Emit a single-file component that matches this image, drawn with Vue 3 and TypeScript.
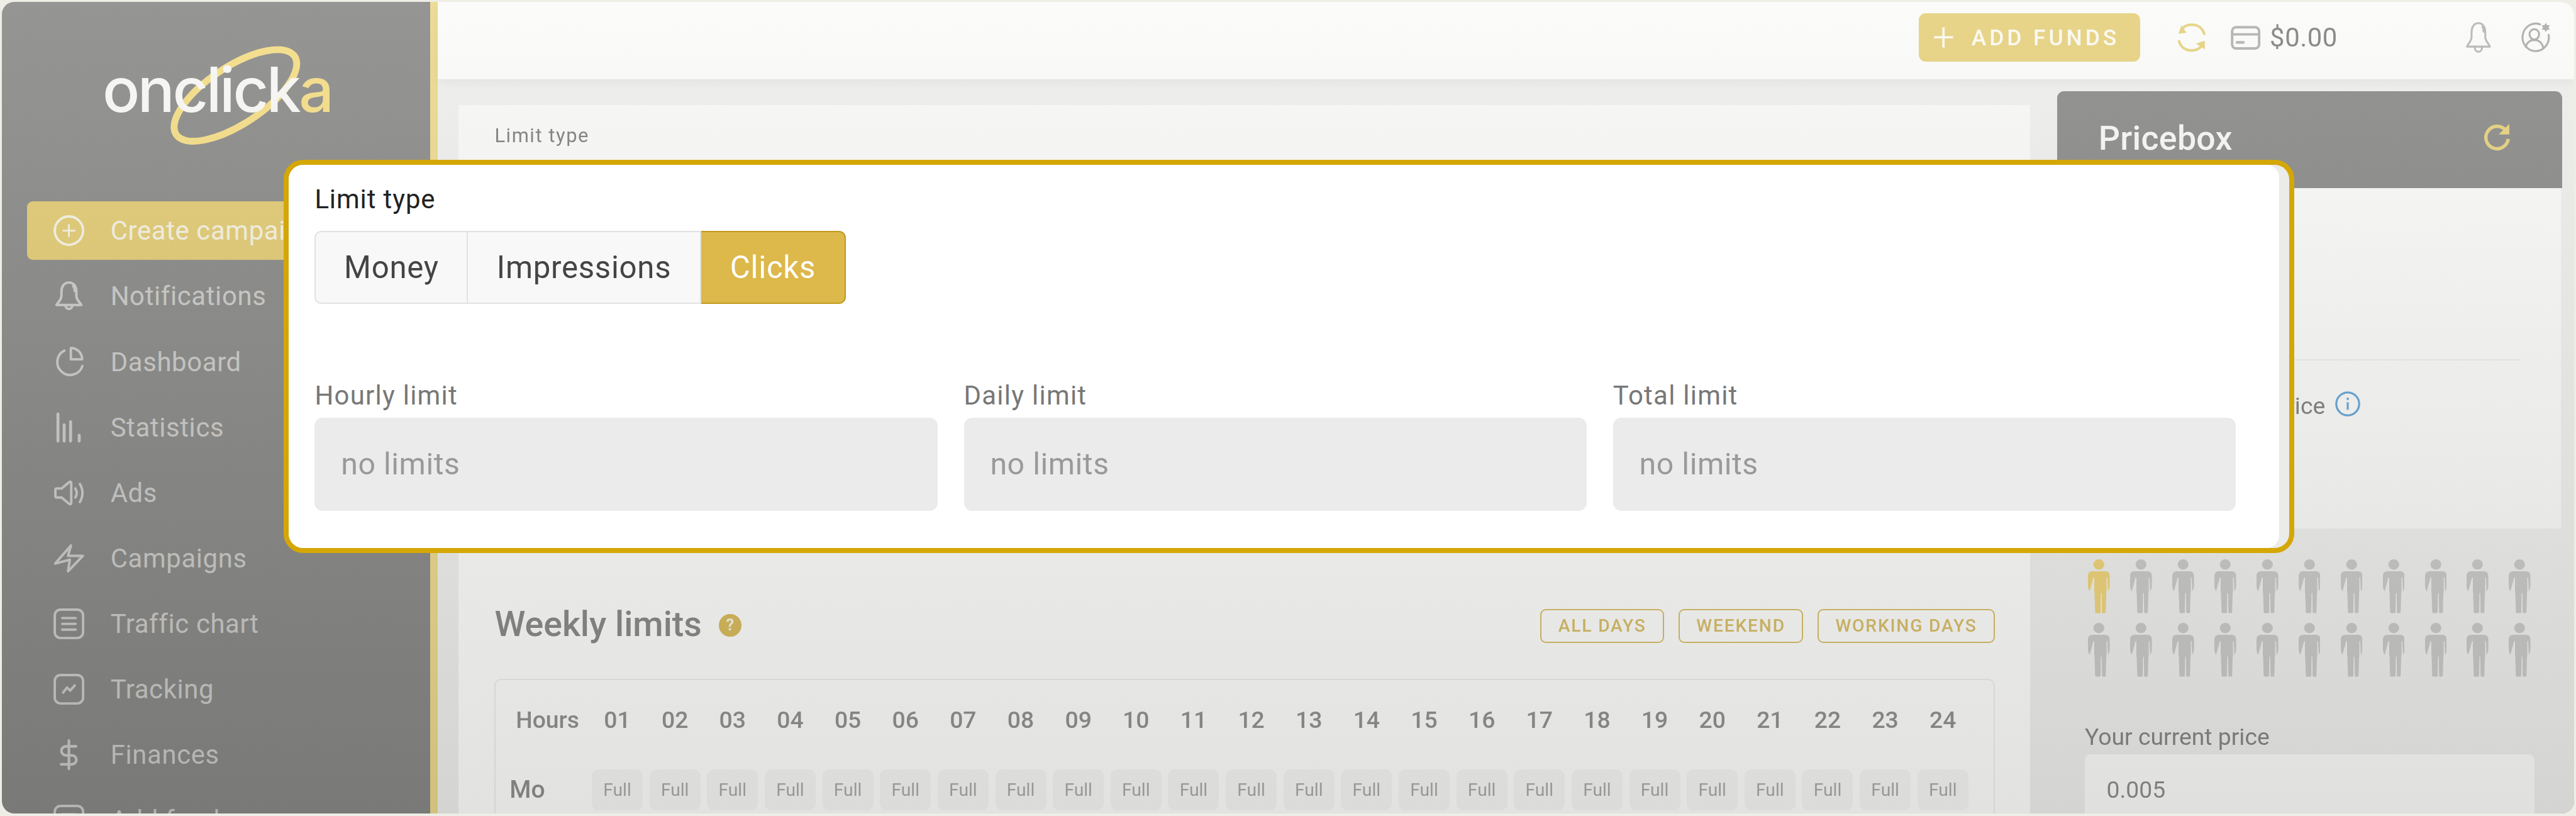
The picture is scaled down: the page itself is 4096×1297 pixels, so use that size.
<script setup lang="ts">
interface NavItem { label: string; icon: string; active?: boolean }
const nav: NavItem[] = [
  { label: 'Create campaign', icon: 'plus', active: true },
  { label: 'Notifications', icon: 'bell' },
  { label: 'Dashboard', icon: 'pie' },
  { label: 'Statistics', icon: 'bars' },
  { label: 'Ads', icon: 'ads' },
  { label: 'Campaigns', icon: 'bolt' },
  { label: 'Traffic chart', icon: 'list' },
  { label: 'Tracking', icon: 'track' },
  { label: 'Finances', icon: 'dollar' },
  { label: 'Add funds', icon: 'list' }
]
const hours: string[] = Array.from({ length: 24 }, (_, i) => String(i + 1).padStart(2, '0'))
const people: number[] = Array.from({ length: 22 }, (_, i) => i)
const limits: string[] = ['Hourly limit', 'Daily limit', 'Total limit']
</script>

<template>
  <div class="stage">
    <div class="window">
      <aside class="sidebar">
        <div class="logo">
          <svg class="ring" viewBox="0 0 227 173" fill="none">
            <ellipse cx="113.5" cy="86.5" rx="124" ry="50" transform="rotate(-33.4 113.5 86.5)" stroke="#f5e092" stroke-width="12" />
          </svg>
          <span class="logo-text">onclick<b>a</b></span>
        </div>
        <nav class="nav">
          <div v-for="item in nav" :key="item.label" class="nav-item" :class="{ active: item.active }">
            <svg class="nav-icon" viewBox="0 0 24 24" fill="none" stroke="currentColor" stroke-width="1.9" stroke-linecap="round" stroke-linejoin="round">
              <template v-if="item.icon === 'plus'">
                <circle cx="12" cy="12" r="11" />
                <path d="M12 7.5v9M7.5 12h9" stroke-width="1.4" />
              </template>
              <template v-else-if="item.icon === 'bell'">
                <path d="M12 1.5C8.2 1.5 6.2 4.6 6.2 8.5v3.4c0 3-2.6 5-3.9 7h19.4c-1.300-2-3.900-4-3.900-7V8.500c0-3.900-2-7-5.800-7Z" />
                <path d="M9.500 19.500a2.500 2.500 0 0 0 5 0M15.300 4.300c.9 1 1.300 2.300 1.300 3.900" />
              </template>
              <template v-else-if="item.icon === 'pie'">
                <path d="M8.500 3.500A10 10 0 1 0 22.500 15.500" />
                <path d="M13.500 1.500a8.800 8.800 0 0 1 8.800 8.800h-8.800Z" />
              </template>
              <template v-else-if="item.icon === 'bars'">
                <path d="M3.500 1.500v21M8.300 10v12.500M13.300 7.500v15M20 18v4.500" stroke-width="2.300" />
              </template>
              <template v-else-if="item.icon === 'ads'">
                <path d="M2.500 8.500h3.800l6-5c.6-.5 1.500-.1 1.500.700v15.600c0 .8-.9 1.200-1.500.7l-6-5H2.500c-.6 0-1-.4-1-1V9.500c0-.6.4-1 1-1Z" />
                <path d="M17 8.500c1.300 2.200 1.300 4.800 0 7M20.500 5c2.700 4.300 2.700 9.700 0 14" />
              </template>
              <template v-else-if="item.icon === 'bolt'">
                <path d="M13.600 2l-2.300 8h11.600L11.300 22l1.400-9-11.400 3Z" />
              </template>
              <template v-else-if="item.icon === 'list'">
                <rect x="1" y="1" width="22" height="22" rx="4.500" />
                <path d="M6.800 7.500h10.400M6.800 12h10.400M6.800 16.500h10.400" />
              </template>
              <template v-else-if="item.icon === 'track'">
                <rect x="1" y="1" width="22" height="22" rx="4.500" />
                <path d="M7.500 14.500l3-3.800 2.500 2.300 3.500-4" />
              </template>
              <template v-else>
                <path d="M12 1v22M17.500 5.500H9.700a3.500 3.500 0 0 0 0 7h4.600a3.500 3.500 0 0 1 0 7H6" stroke-width="2.100" />
              </template>
            </svg>
            <span>{{ item.label }}</span>
          </div>
        </nav>
      </aside>

      <div class="main">
        <header class="topbar">
          <button class="add-funds"><span class="plus">+</span>ADD FUNDS</button>
          <svg class="sync" viewBox="0 0 24 24" fill="none" stroke="#e8d58a" stroke-width="2.200" stroke-linecap="round">
            <path d="M23 9C21.500 4 17.500 1 12 1 8 1 5 2.500 3 5.500" />
            <path d="M1 15.500C2.500 20.500 6.500 23.500 12 23.500c4 0 7-1.500 9-4.500" />
            <path d="M.5 9 3 1.500 7.500 8Z M23.500 15v7.500l-7.700-5Z" fill="#e8d58a" stroke="none" />
          </svg>
          <svg class="wallet" viewBox="0 0 26 21" fill="none" stroke="#b8b8b6" stroke-width="2.200">
            <rect x="1.200" y="1.200" width="23.600" height="18.600" rx="3.500" />
            <path d="M1.200 7.500h23.600" stroke-width="2" />
            <path d="M5.500 14.500h5.500" stroke-width="2.400" stroke-linecap="round" />
          </svg>
          <span class="balance">$0.00</span>
          <svg class="t-bell" viewBox="0 0 24 27" fill="none" stroke="#bdbdbb" stroke-width="1.700" stroke-linecap="round" stroke-linejoin="round">
            <path d="M12 1C8 1 6 4.500 6 9v4c0 3.500-3 6-4 8.500h20c-1-2.500-4-5-4-8.500V9c0-4.500-2-8-6-8Z" />
            <path d="M9 21.500v1.500a3 3 0 0 0 6 0v-1.500M15.500 4c.8 1.200 1.100 2.700 1.100 4.500" />
          </svg>
          <svg class="t-user" viewBox="0 0 27 26" fill="none" stroke="#b3b3b1" stroke-width="1.700" stroke-linecap="round">
            <path d="M17.500 1.800A11.500 12 0 1 0 25 11" />
            <ellipse cx="12.500" cy="10.500" rx="4.200" ry="4.500" />
            <path d="M5 21.500c.8-3.500 3.500-6 7.500-6s6.700 2.500 7.500 6" />
            <path d="M22.500.5l1.200 2 2.300 0-1.100 2 1.100 2-2.300 0-1.200 2-1.200-2-2.300 0 1.100-2-1.100-2 2.300 0Z" fill="#b3b3b1" stroke="none" />
          </svg>
        </header>

        <div class="content">
          <section class="card">
            <div class="small-label">Limit type</div>
            <div class="weekly-head">
              <h2>Weekly limits</h2>
              <span class="help">?</span>
              <div class="presets">
                <span class="preset">ALL DAYS</span>
                <span class="preset">WEEKEND</span>
                <span class="preset">WORKING DAYS</span>
              </div>
            </div>
            <div class="table">
              <div class="row head">
                <span class="hours">Hours</span>
                <span v-for="h in hours" :key="h" class="hour">{{ h }}</span>
              </div>
              <div class="row cells">
                <span class="day">Mo</span>
                <span v-for="h in hours" :key="h" class="cell">Full</span>
              </div>
            </div>
          </section>

          <aside class="pricebox">
            <div class="pb-head">
              <span>Pricebox</span>
              <svg class="pb-refresh" viewBox="0 0 24 25" fill="none" stroke="#e8d58a" stroke-width="3">
                <path d="M19.500 6.500A10 10 0 1 0 22 14.500" />
                <path d="M23 1v9.500h-9.500Z" fill="#e8d58a" stroke="none" />
              </svg>
            </div>
            <div class="pb-top">
              <div class="divider"></div>
              <div class="rec">
                <span class="rec-text">Recommended price</span>
                <svg class="info" viewBox="0 0 44 44" fill="none" stroke="#74aed9" stroke-width="3.500">
                  <circle cx="22" cy="22" r="20" />
                  <path d="M22 19v13M22 11v4" />
                </svg>
              </div>
            </div>
            <div class="pb-bottom">
              <div class="people">
                <svg v-for="p in people" :key="p" class="person" :class="{ on: p === 0 }" viewBox="0 0 38 94" fill="currentColor">
                  <ellipse cx="19" cy="9" rx="9.500" ry="9" />
                  <path d="M8 21h22c5 0 8 3 8 8v17c0 4-1 7-3 10l-1-24h-1.500v24l-.5 3-1 33c0 1.500-1 2-2.500 2h-1.500c-1.500 0-2.500-.5-2.500-2l-.5-33h-1.500l-.5 33c0 1.500-1 2-2.500 2H15c-1.500 0-2.500-.5-2.500-2l-1-33-.5-3V32H9.500L3 56c-2-3-3-6-3-10V29c0-5 3-8 8-8Z" />
                </svg>
              </div>
              <div class="cur-label">Your current price</div>
              <div class="cur-input">0.005</div>
            </div>
          </aside>
        </div>
      </div>

      <div class="dim"></div>

      <div class="modal">
        <div class="panel">
          <div class="m-label">Limit type</div>
          <div class="segments">
            <span class="seg">Money</span>
            <span class="seg">Impressions</span>
            <span class="seg selected">Clicks</span>
          </div>
          <div class="fields">
            <div v-for="l in limits" :key="l" class="field">
              <div class="f-label">{{ l }}</div>
              <div class="f-input">no limits</div>
            </div>
          </div>
        </div>
      </div>
    </div>
  </div>
</template>

<style scoped>
.stage {
  zoom: 0.91022;
  width: 4500px;
  height: 1425px;
  padding: 3px 3px 4px;
  box-sizing: border-box;
  font-family: Roboto, "Liberation Sans", sans-serif;
}
.window {
  position: relative;
  isolation: isolate;
  width: 100%;
  height: 100%;
  display: flex;
  overflow: hidden;
  border-radius: 22px;
  background: #f0f0ee;
}
.sidebar {
  width: 762px;
  flex: none;
  box-sizing: border-box;
  background: #959593;
  border-right: 14px solid #eedd98;
}
.logo {
  position: relative;
  height: 349px;
}
.ring {
  position: absolute;
  left: 295px;
  top: 77px;
  width: 227px;
  height: 173px;
  overflow: visible;
}
.logo-text {
  position: absolute;
  left: 176px;
  top: 88px;
  font-family: Inter, sans-serif;
  font-size: 108px;
  line-height: 132px;
  font-weight: 500;
  letter-spacing: -3.8px;
  color: #f8f8f6;
}
.logo-text b {
  font-weight: 500;
  color: #f5e092;
}
.nav {
  display: flex;
  flex-direction: column;
  gap: 12.4px;
  padding-left: 44px;
}
.nav-item {
  display: flex;
  align-items: center;
  gap: 46px;
  height: 102px;
  width: 660px;
  flex: none;
  box-sizing: border-box;
  padding-left: 46px;
  border-radius: 10px;
  font-size: 46px;
  letter-spacing: 0.7px;
  color: #cfcfcd;
}
.nav-item.active {
  background: #e4d080;
  color: #f6f3e4;
}
.nav-icon {
  width: 54px;
  height: 54px;
  flex: none;
  overflow: visible;
}
.main {
  flex: 1;
  min-width: 0;
  display: flex;
  flex-direction: column;
}
.topbar {
  height: 135px;
  flex: none;
  box-sizing: border-box;
  display: flex;
  align-items: center;
  justify-content: flex-end;
  padding: 0 41px 10px 0;
  background: #fbfbf9;
  box-shadow: 0 4px 18px rgba(0, 0, 0, 0.05);
}
.add-funds {
  width: 387px;
  height: 85px;
  display: flex;
  align-items: center;
  padding: 0 0 0 24px;
  box-sizing: border-box;
  border: 0;
  border-radius: 12px;
  background: #e8d58a;
  color: #fbfaf2;
  font: 500 39px Roboto, sans-serif;
  letter-spacing: 5.400px;
}
.plus {
  font-size: 68px;
  font-weight: 300;
  margin-right: 24px;
  line-height: 1;
}
.sync { width: 48px; height: 49px; margin-left: 66px; flex: none; overflow: visible; }
.wallet { width: 52px; height: 42px; margin-left: 44px; flex: none; }
.balance { margin-left: 16px; width: 340px; font-size: 46px; letter-spacing: 0.6px; color: #8c8c8a; }
.t-bell { width: 48px; height: 54px; flex: none; }
.t-user { width: 54px; height: 53px; margin-left: 49px; flex: none; }
.content {
  flex: 1;
  min-height: 0;
  display: flex;
  gap: 48px;
  padding: 21px 0 0 36px;
  overflow: hidden;
}
.card {
  width: 2745px;
  flex: none;
  margin-top: 24px;
  padding: 36px 0 0 63px;
  box-sizing: border-box;
  background: linear-gradient(180deg, #f9f9f7, #fefefc);
}
.small-label {
  font-size: 34px;
  line-height: 38px;
  letter-spacing: 1.7px;
  color: #8a8a88;
}
.weekly-head {
  display: flex;
  align-items: center;
  width: 2621px;
  height: 60px;
  margin-top: 806px;
}
.weekly-head h2 {
  margin: -5px 0 0;
  font-size: 61px;
  line-height: 60px;
  font-weight: 500;
  color: #959593;
}
.help {
  width: 39px;
  height: 39px;
  margin: -2px 0 0 30px;
  border-radius: 50%;
  background: #dcc26c;
  color: #f6f4e6;
  font-size: 28px;
  font-weight: 700;
  line-height: 39px;
  text-align: center;
}
.presets {
  margin-left: auto;
  display: flex;
  gap: 25px;
}
.preset {
  height: 60px;
  box-sizing: border-box;
  padding: 0 29px;
  border: 3px solid #dcc578;
  border-radius: 10px;
  color: #dcc578;
  font-size: 31px;
  line-height: 54px;
  letter-spacing: 2px;
  font-weight: 500;
}
.table {
  width: 2621px;
  height: 400px;
  box-sizing: border-box;
  margin-top: 62px;
  border: 3px solid #efefed;
  border-radius: 12px;
}
.row {
  display: grid;
  grid-template-columns: 156px repeat(24, 89px);
  column-gap: 11.700px;
  align-items: center;
}
.head {
  height: 60px;
  margin-top: 40px;
  font-size: 41px;
  font-weight: 500;
  color: #9d9d9b;
}
.hours { padding-left: 35px; }
.hour { text-align: center; }
.cells { height: 72px; margin-top: 56px; }
.day {
  padding-left: 24px;
  font-size: 43px;
  font-weight: 500;
  color: #9b9b99;
}
.cell {
  height: 72px;
  border-radius: 12px;
  background: #f7f7f5;
  color: #b3b3b1;
  font-size: 31px;
  line-height: 72px;
  text-align: center;
}
.pricebox {
  width: 882px;
  flex: none;
}
.pb-head {
  height: 169px;
  display: flex;
  align-items: center;
  justify-content: space-between;
  padding: 0 90px 0 72px;
  box-sizing: border-box;
  border-radius: 12px 12px 0 0;
  background: #959593;
  color: #f7f7f5;
  font-size: 59px;
  font-weight: 500;
  letter-spacing: 0.3px;
}
.pb-head span { margin-top: -4px; }
.pb-refresh { width: 47px; height: 49px; margin-top: -10px; overflow: visible; }
.pb-top {
  height: 595px;
  box-sizing: border-box;
  padding: 299px 0 0 47px;
  margin-right: 2px;
  background: #fafaf8;
}
.divider {
  width: 760px;
  height: 3px;
  background: #ededeb;
}
.rec {
  display: flex;
  align-items: center;
  gap: 17px;
  margin-top: 54px;
  font-size: 41px;
  line-height: 50px;
  color: #8c8c8a;
}
.rec-text {
  width: 421px;
  white-space: nowrap;
  text-align: right;
}
.info { width: 44px; height: 44px; margin-top: -8px; }
.pb-bottom {
  padding: 54px 0 0 54px;
  background: #f0f0ee;
}
.people {
  display: grid;
  grid-template-columns: repeat(11, 38px);
  column-gap: 35.500px;
  row-gap: 17px;
}
.person {
  width: 38px;
  height: 94px;
  color: #cfcfcd;
}
.person.on { color: #f0d888; }
.cur-label {
  margin: 80px 0 0 -6px;
  font-size: 41px;
  line-height: 50px;
  color: #939391;
}
.cur-input {
  width: 786px;
  height: 130px;
  margin: 5px 0 0 -6px;
  padding-left: 38px;
  box-sizing: border-box;
  border-radius: 10px;
  background: #fcfcfa;
  color: #9a9a98;
  font-size: 41px;
  line-height: 124px;
}
.dim {
  position: absolute;
  inset: 0;
  z-index: 1;
  pointer-events: none;
  mix-blend-mode: difference;
  background: linear-gradient(180deg, #000000, #1c1c1c);
}
.modal {
  position: absolute;
  z-index: 2;
  left: 492px;
  top: 276px;
  width: 3513px;
  height: 687px;
  box-sizing: border-box;
  border: 9px solid #d4a707;
  border-radius: 34px;
  background: #ebebe9;
  overflow: hidden;
}
.panel {
  height: 100%;
  margin-right: 18px;
  box-sizing: border-box;
  padding: 33px 0 0 46px;
  border-radius: 0 22px 22px 0;
  background: #ffffff;
}
.m-label {
  font-size: 46px;
  line-height: 54px;
  letter-spacing: 1px;
  color: #222222;
}
.segments {
  display: flex;
  width: 928px;
  height: 128px;
  margin-top: 28px;
}
.seg {
  display: flex;
  align-items: center;
  justify-content: center;
  box-sizing: border-box;
  border: 3px solid #e2e2e2;
  border-left-width: 0;
  background: #f8f8f8;
  color: #444444;
  font-size: 54px;
  letter-spacing: 0.8px;
}
.seg:nth-child(1) { width: 268px; border-left-width: 3px; border-radius: 12px 0 0 12px; }
.seg:nth-child(2) { width: 407px; }
.seg.selected {
  width: 253px;
  border: 3px solid #c09a1a;
  border-left-width: 0;
  border-radius: 0 12px 12px 0;
  background: #ddb84a;
  color: #ffffff;
}
.fields {
  display: grid;
  grid-template-columns: repeat(3, 1088px);
  column-gap: 46px;
  margin-top: 133px;
}
.f-label {
  font-size: 46px;
  line-height: 54px;
  letter-spacing: 1.4px;
  color: #777777;
}
.f-input {
  height: 162px;
  margin-top: 12px;
  padding-left: 46px;
  box-sizing: border-box;
  border-radius: 14px;
  background: #ebebeb;
  color: #999999;
  font-size: 53px;
  letter-spacing: 0.6px;
  line-height: 162px;
}
</style>

<style>
html, body {
  margin: 0;
  overflow: hidden;
  background: #eeeee6;
}
</style>
